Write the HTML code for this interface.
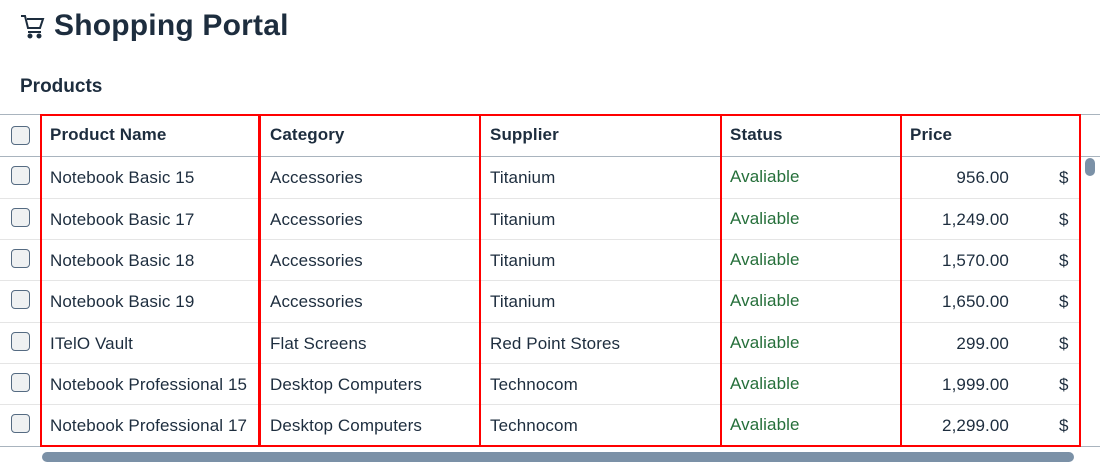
<!DOCTYPE html>
<html><head><style>
*{margin:0;padding:0;box-sizing:border-box}
body{width:1100px;height:467px;background:#fff;font-family:"Liberation Sans",sans-serif;color:#1d2d3e;position:relative;overflow:hidden}
.a{position:absolute;white-space:nowrap}
h1{position:absolute;left:54px;top:9px;font-size:30px;font-weight:bold;letter-spacing:0.2px}
.hl{position:absolute;left:0;width:1080px;height:1px;background:#a9b4be}
.rl{position:absolute;left:0;width:1080px;height:1px;background:#e5e5e5}
.cb{position:absolute;left:11px;width:19px;height:19px;border:1px solid #556b82;border-radius:4px;background:#eff1f2}
.t{position:absolute;font-size:17px;letter-spacing:0.1px}
.h{font-weight:bold}
.g{color:#256f3a}
.box{position:absolute;top:114px;height:333px;border:2px solid #f00}
</style></head><body>
<svg class="a" style="left:20px;top:14px" width="26" height="26" viewBox="0 0 26 26" fill="none" stroke="#1d2d3e" stroke-width="2"><path d="M1 2h4l3 12h12l3-9H7"/><path d="M8 18h13"/><circle cx="10" cy="22" r="1.5" fill="#1d2d3e"/><circle cx="19" cy="22" r="1.5" fill="#1d2d3e"/></svg>
<h1>Shopping Portal</h1>
<div class="a" style="left:20px;top:76px;font-size:19px;font-weight:bold">Products</div>
<div class="hl" style="top:114px;width:1100px"></div>
<div class="hl" style="top:156px;width:1100px"></div>
<div class="rl" style="top:198px"></div><div class="rl" style="top:239px"></div><div class="rl" style="top:280px"></div><div class="rl" style="top:322px"></div><div class="rl" style="top:363px"></div><div class="rl" style="top:404px"></div>
<div class="hl" style="top:446px;width:1100px"></div>
<div class="cb" style="top:126px"></div>
<div class="t h" style="left:50px;top:125px">Product Name</div>
<div class="t h" style="left:270px;top:125px">Category</div>
<div class="t h" style="left:490px;top:125px">Supplier</div>
<div class="t h" style="left:730px;top:125px">Status</div>
<div class="t h" style="left:910px;top:125px">Price</div>
<div class="box" style="left:40px;width:220px"></div>
<div class="box" style="left:259px;width:222px"></div>
<div class="box" style="left:479px;width:243px"></div>
<div class="box" style="left:720px;width:182px"></div>
<div class="box" style="left:900px;width:181px"></div>
<div class="a" style="left:1085px;top:158px;width:10px;height:18px;border-radius:5px;background:#7b91a7"></div>
<div class="a" style="left:42px;top:452px;width:1032px;height:10px;border-radius:5px;background:#7b91a7"></div>
<div id="rows"></div>
<script>
var d=[["Notebook Basic 15","Accessories","Titanium","956.00"],["Notebook Basic 17","Accessories","Titanium","1,249.00"],["Notebook Basic 18","Accessories","Titanium","1,570.00"],["Notebook Basic 19","Accessories","Titanium","1,650.00"],["ITelO Vault","Flat Screens","Red Point Stores","299.00"],["Notebook Professional 15","Desktop Computers","Technocom","1,999.00"],["Notebook Professional 17","Desktop Computers","Technocom","2,299.00"]];
var tops=[156,198,239,280,322,363,404],h="";
d.forEach(function(r,i){var y=tops[i]+12;
h+='<div class="cb" style="top:'+(y-2)+'px"></div>'+
'<div class="t" style="left:50px;top:'+y+'px">'+r[0]+'</div>'+
'<div class="t" style="left:270px;top:'+y+'px">'+r[1]+'</div>'+
'<div class="t" style="left:490px;top:'+y+'px">'+r[2]+'</div>'+
'<div class="t g" style="left:730px;top:'+(y-1)+'px">Avaliable</div>'+
'<div class="t" style="right:91px;top:'+y+'px">'+r[3]+'</div>'+
'<div class="t" style="left:1059px;top:'+y+'px">$</div>';});
document.getElementById("rows").innerHTML=h;
</script>
</body></html>
